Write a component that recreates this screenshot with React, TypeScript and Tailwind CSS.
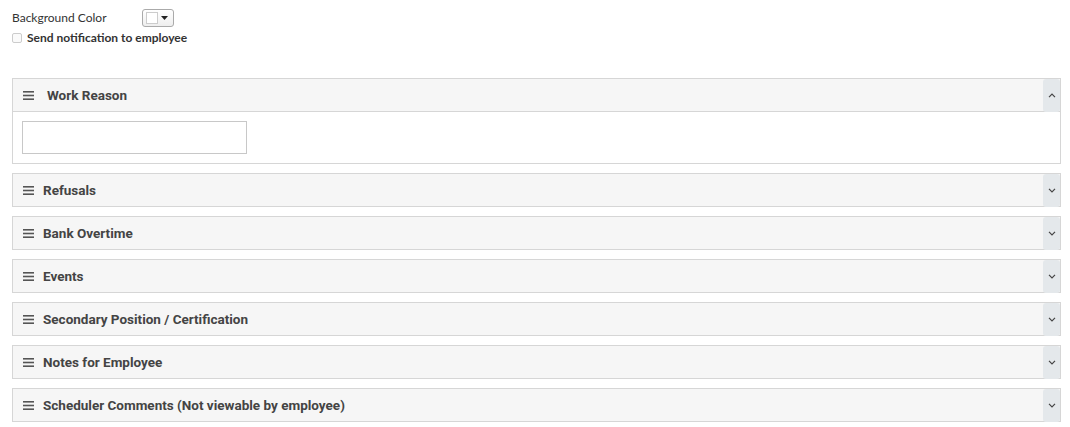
import React from 'react';

const sections = [
  'Refusals',
  'Bank Overtime',
  'Events',
  'Secondary Position / Certification',
  'Notes for Employee',
  'Scheduler Comments (Not viewable by employee)',
];

const Hamburger: React.FC = () => (
  <svg width="11" height="9" viewBox="0 0 11 9" className="shrink-0">
    <rect x="0" y="0" width="11" height="1.6" fill="#555" />
    <rect x="0" y="3.7" width="11" height="1.6" fill="#555" />
    <rect x="0" y="7.4" width="11" height="1.6" fill="#555" />
  </svg>
);

const Chevron: React.FC<{ up?: boolean }> = ({ up }) => (
  <svg width="8" height="5" viewBox="0 0 8 5">
    <path
      d={up ? 'M1 4.2 L4 1.2 L7 4.2' : 'M1 0.8 L4 3.8 L7 0.8'}
      fill="none"
      stroke="#444"
      strokeWidth="1.2"
    />
  </svg>
);

const PanelHeader: React.FC<{ title: string; open?: boolean }> = ({ title, open }) => (
  <div className="flex h-[32px] items-center bg-[#f6f6f6]">
    <div className={`flex items-center pl-[10px] ${open ? 'gap-[13px]' : 'gap-[9px]'}`}>
      <Hamburger />
      <span className="text-[13.5px] font-bold text-[#444] [font-family:Roboto,'Liberation_Sans',sans-serif]">
        {title}
      </span>
    </div>
    <div className="ml-auto flex h-[33px] w-[17px] items-center justify-center self-start rounded-[3px] bg-[#e4e8eb]">
      <Chevron up={open} />
    </div>
  </div>
);

const App: React.FC = () => {
  return (
    <div className="min-h-[427px] bg-white pl-3 pr-[9px] pt-[9px] [font-family:Lato,'Open_Sans',sans-serif]">
      <div className="flex items-center">
        <span className="w-[130px] text-[12px] text-[#333]">Background Color</span>
        <button className="flex h-[18px] w-[32px] items-center gap-[3px] rounded-[3px] border border-[#aaa] bg-gradient-to-b from-white to-[#eee] pl-[3px]">
          <span className="h-[12px] w-[12px] border border-[#ccc] bg-white" />
          <svg width="7" height="4" viewBox="0 0 7 4">
            <path d="M0 0 L7 0 L3.5 4 Z" fill="#222" />
          </svg>
        </button>
      </div>
      <label className="mt-[2px] flex items-center gap-[5px]">
        <span className="h-[10px] w-[10px] rounded-[2px] border border-[#ccc] bg-[#fafafa]" />
        <span className="text-[12px] font-bold text-[#333]">Send notification to employee</span>
      </label>

      <div className="mt-[31px] flex flex-col gap-[9px]">
        <div className="border border-[#d6d6d6]">
          <div className="border-b border-[#d6d6d6]">
            <PanelHeader title="Work Reason" open />
          </div>
          <div className="px-[9px] py-[9px]">
            <input className="block h-[33px] w-[225px] border border-[#c8c8c8] bg-white outline-none" />
          </div>
        </div>
        {sections.map(s => (
          <div key={s} className="border border-[#d6d6d6]">
            <PanelHeader title={s} />
          </div>
        ))}
      </div>
    </div>
  );
};

export default App;
